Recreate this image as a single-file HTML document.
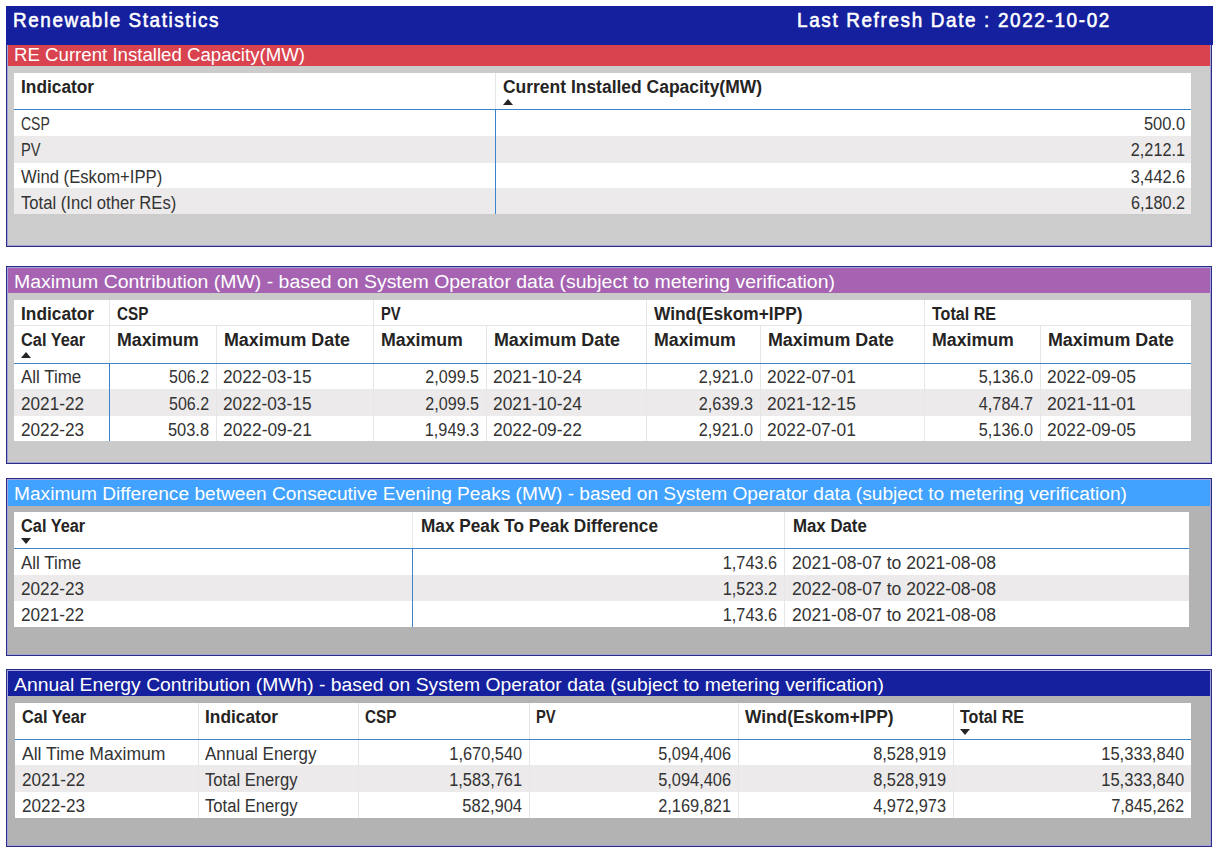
<!DOCTYPE html>
<html><head><meta charset="utf-8"><title>Renewable Statistics</title>
<style>
html,body{margin:0;padding:0;}
body{width:1220px;height:855px;position:relative;overflow:hidden;background:#FFFFFF;font-family:"Liberation Sans",sans-serif;}
body>div{position:absolute;}
.t{white-space:nowrap;}
</style></head><body>
<div style="left:6px;top:40px;width:1206px;height:207px;box-sizing:border-box;border:1px solid #2A2C86;box-shadow:inset 0 0 0 1px #A3A3DA;background:#CCCCCC"></div>
<div style="left:8px;top:45px;width:1202px;height:21px;background:#D8434F;"></div>
<div class="t" style="left:14px;top:44px;font-size:18px;line-height:22px;font-weight:400;color:#FFFFFF;transform:scaleX(1.0353);transform-origin:0 0">RE Current Installed Capacity(MW)</div>
<div style="left:6px;top:6px;width:1207px;height:39px;background:#15209E;"></div>
<div class="t" style="left:12.5px;top:7px;font-size:21px;line-height:25px;color:#FFFFFF;letter-spacing:1.753px;transform:scaleX(0.9);transform-origin:0 0;-webkit-text-stroke:0.6px #FFFFFF">Renewable Statistics</div>
<div class="t" style="left:797px;top:7px;font-size:21px;line-height:25px;color:#FFFFFF;letter-spacing:1.823px;transform:scaleX(0.9);transform-origin:0 0;-webkit-text-stroke:0.6px #FFFFFF">Last Refresh Date : 2022-10-02</div>
<div style="left:14px;top:73px;width:1177px;height:141px;background:#FFFFFF;"></div>
<div style="left:14px;top:136px;width:1177px;height:27px;background:#ECEAEB;"></div>
<div style="left:14px;top:188px;width:1177px;height:26px;background:#ECEAEB;"></div>
<div style="left:14px;top:109px;width:1177px;height:1px;background:#3A84CC;"></div>
<div style="left:495px;top:73px;width:1px;height:36px;background:#E6E6E6;"></div>
<div style="left:495px;top:109px;width:1px;height:105px;background:#3A84CC;"></div>
<div class="t" style="left:21px;top:76px;font-size:18px;line-height:22px;font-weight:700;color:#252423;transform:scaleX(0.9618);transform-origin:0 0">Indicator</div>
<div class="t" style="left:503px;top:76px;font-size:18px;line-height:22px;font-weight:700;color:#252423;transform:scaleX(0.9699);transform-origin:0 0">Current Installed Capacity(MW)</div>
<div style="left:503px;top:99px;width:0;height:0;border-left:5.5px solid transparent;border-right:5.5px solid transparent;border-bottom:6px solid #252423"></div>
<div class="t" style="left:21px;top:113px;font-size:18px;line-height:22px;font-weight:400;color:#333333;transform:scaleX(0.7759);transform-origin:0 0">CSP</div>
<div class="t" style="right:35.00px;top:113px;font-size:18px;line-height:22px;font-weight:400;color:#333333;transform:scaleX(0.9129);transform-origin:100% 0">500.0</div>
<div class="t" style="left:21px;top:139px;font-size:18px;line-height:22px;font-weight:400;color:#333333;transform:scaleX(0.8150);transform-origin:0 0">PV</div>
<div class="t" style="right:35.00px;top:139px;font-size:18px;line-height:22px;font-weight:400;color:#333333;transform:scaleX(0.9034);transform-origin:100% 0">2,212.1</div>
<div class="t" style="left:21px;top:166px;font-size:18px;line-height:22px;font-weight:400;color:#333333;transform:scaleX(0.9256);transform-origin:0 0">Wind (Eskom+IPP)</div>
<div class="t" style="right:35.00px;top:166px;font-size:18px;line-height:22px;font-weight:400;color:#333333;transform:scaleX(0.9034);transform-origin:100% 0">3,442.6</div>
<div class="t" style="left:21px;top:192px;font-size:18px;line-height:22px;font-weight:400;color:#333333;transform:scaleX(0.9240);transform-origin:0 0">Total (Incl other REs)</div>
<div class="t" style="right:35.00px;top:192px;font-size:18px;line-height:22px;font-weight:400;color:#333333;transform:scaleX(0.9005);transform-origin:100% 0">6,180.2</div>
<div style="left:6px;top:266px;width:1206px;height:198px;box-sizing:border-box;border:1px solid #2A2C86;box-shadow:inset 0 0 0 1px #A3A3DA;background:#CACACA"></div>
<div style="left:8px;top:268px;width:1202px;height:25px;background:#A563B1;"></div>
<div class="t" style="left:13.5px;top:271px;font-size:18px;line-height:22px;font-weight:400;color:#FFFFFF;transform:scaleX(1.0798);transform-origin:0 0">Maximum Contribution (MW) - based on System Operator data (subject to metering verification)</div>
<div style="left:14px;top:300px;width:1177px;height:141px;background:#FFFFFF;"></div>
<div style="left:14px;top:389px;width:1177px;height:27px;background:#ECEAEB;"></div>
<div style="left:14px;top:325px;width:1177px;height:1px;background:#E6E6E6;"></div>
<div style="left:109px;top:300px;width:1px;height:25px;background:#E6E6E6;"></div>
<div style="left:373px;top:300px;width:1px;height:25px;background:#E6E6E6;"></div>
<div style="left:646px;top:300px;width:1px;height:25px;background:#E6E6E6;"></div>
<div style="left:924px;top:300px;width:1px;height:25px;background:#E6E6E6;"></div>
<div style="left:109px;top:326px;width:1px;height:37px;background:#E6E6E6;"></div>
<div style="left:109px;top:364px;width:1px;height:77px;background:#3A84CC;"></div>
<div style="left:216px;top:326px;width:1px;height:37px;background:#E6E6E6;"></div>
<div style="left:216px;top:364px;width:1px;height:77px;background:#E6E6E6;"></div>
<div style="left:373px;top:326px;width:1px;height:37px;background:#E6E6E6;"></div>
<div style="left:373px;top:364px;width:1px;height:77px;background:#E6E6E6;"></div>
<div style="left:486px;top:326px;width:1px;height:37px;background:#E6E6E6;"></div>
<div style="left:486px;top:364px;width:1px;height:77px;background:#E6E6E6;"></div>
<div style="left:646px;top:326px;width:1px;height:37px;background:#E6E6E6;"></div>
<div style="left:646px;top:364px;width:1px;height:77px;background:#E6E6E6;"></div>
<div style="left:760px;top:326px;width:1px;height:37px;background:#E6E6E6;"></div>
<div style="left:760px;top:364px;width:1px;height:77px;background:#E6E6E6;"></div>
<div style="left:924px;top:326px;width:1px;height:37px;background:#E6E6E6;"></div>
<div style="left:924px;top:364px;width:1px;height:77px;background:#E6E6E6;"></div>
<div style="left:1040px;top:326px;width:1px;height:37px;background:#E6E6E6;"></div>
<div style="left:1040px;top:364px;width:1px;height:77px;background:#E6E6E6;"></div>
<div style="left:14px;top:363px;width:1177px;height:1px;background:#3A84CC;"></div>
<div class="t" style="left:21px;top:303px;font-size:18px;line-height:22px;font-weight:700;color:#252423;transform:scaleX(0.9618);transform-origin:0 0">Indicator</div>
<div class="t" style="left:117px;top:303px;font-size:18px;line-height:22px;font-weight:700;color:#252423;transform:scaleX(0.8462);transform-origin:0 0">CSP</div>
<div class="t" style="left:381px;top:303px;font-size:18px;line-height:22px;font-weight:700;color:#252423;transform:scaleX(0.8180);transform-origin:0 0">PV</div>
<div class="t" style="left:654px;top:303px;font-size:18px;line-height:22px;font-weight:700;color:#252423;transform:scaleX(0.9620);transform-origin:0 0">Wind(Eskom+IPP)</div>
<div class="t" style="left:932px;top:303px;font-size:18px;line-height:22px;font-weight:700;color:#252423;transform:scaleX(0.8928);transform-origin:0 0">Total RE</div>
<div class="t" style="left:21px;top:329px;font-size:18px;line-height:22px;font-weight:700;color:#252423;transform:scaleX(0.9075);transform-origin:0 0">Cal Year</div>
<div class="t" style="left:117px;top:329px;font-size:18px;line-height:22px;font-weight:700;color:#252423;transform:scaleX(0.9864);transform-origin:0 0">Maximum</div>
<div class="t" style="left:224px;top:329px;font-size:18px;line-height:22px;font-weight:700;color:#252423;transform:scaleX(0.9919);transform-origin:0 0">Maximum Date</div>
<div class="t" style="left:381px;top:329px;font-size:18px;line-height:22px;font-weight:700;color:#252423;transform:scaleX(0.9864);transform-origin:0 0">Maximum</div>
<div class="t" style="left:494px;top:329px;font-size:18px;line-height:22px;font-weight:700;color:#252423;transform:scaleX(0.9919);transform-origin:0 0">Maximum Date</div>
<div class="t" style="left:654px;top:329px;font-size:18px;line-height:22px;font-weight:700;color:#252423;transform:scaleX(0.9864);transform-origin:0 0">Maximum</div>
<div class="t" style="left:768px;top:329px;font-size:18px;line-height:22px;font-weight:700;color:#252423;transform:scaleX(0.9919);transform-origin:0 0">Maximum Date</div>
<div class="t" style="left:932px;top:329px;font-size:18px;line-height:22px;font-weight:700;color:#252423;transform:scaleX(0.9864);transform-origin:0 0">Maximum</div>
<div class="t" style="left:1048px;top:329px;font-size:18px;line-height:22px;font-weight:700;color:#252423;transform:scaleX(0.9919);transform-origin:0 0">Maximum Date</div>
<div style="left:21px;top:352px;width:0;height:0;border-left:5.5px solid transparent;border-right:5.5px solid transparent;border-bottom:6px solid #252423"></div>
<div class="t" style="left:21px;top:366px;font-size:18px;line-height:22px;font-weight:400;color:#333333;transform:scaleX(0.9416);transform-origin:0 0">All Time</div>
<div class="t" style="right:1011.00px;top:366px;font-size:18px;line-height:22px;font-weight:400;color:#333333;transform:scaleX(0.8880);transform-origin:100% 0">506.2</div>
<div class="t" style="left:223px;top:366px;font-size:18px;line-height:22px;font-weight:400;color:#333333;transform:scaleX(0.9612);transform-origin:0 0">2022-03-15</div>
<div class="t" style="right:741.00px;top:366px;font-size:18px;line-height:22px;font-weight:400;color:#333333;transform:scaleX(0.8955);transform-origin:100% 0">2,099.5</div>
<div class="t" style="left:493px;top:366px;font-size:18px;line-height:22px;font-weight:400;color:#333333;transform:scaleX(0.9653);transform-origin:0 0">2021-10-24</div>
<div class="t" style="right:467.00px;top:366px;font-size:18px;line-height:22px;font-weight:400;color:#333333;transform:scaleX(0.9034);transform-origin:100% 0">2,921.0</div>
<div class="t" style="left:767px;top:366px;font-size:18px;line-height:22px;font-weight:400;color:#333333;transform:scaleX(0.9653);transform-origin:0 0">2022-07-01</div>
<div class="t" style="right:187.00px;top:366px;font-size:18px;line-height:22px;font-weight:400;color:#333333;transform:scaleX(0.9034);transform-origin:100% 0">5,136.0</div>
<div class="t" style="left:1047px;top:366px;font-size:18px;line-height:22px;font-weight:400;color:#333333;transform:scaleX(0.9653);transform-origin:0 0">2022-09-05</div>
<div class="t" style="left:21px;top:393px;font-size:18px;line-height:22px;font-weight:400;color:#333333;transform:scaleX(0.9537);transform-origin:0 0">2021-22</div>
<div class="t" style="right:1011.00px;top:393px;font-size:18px;line-height:22px;font-weight:400;color:#333333;transform:scaleX(0.8880);transform-origin:100% 0">506.2</div>
<div class="t" style="left:223px;top:393px;font-size:18px;line-height:22px;font-weight:400;color:#333333;transform:scaleX(0.9612);transform-origin:0 0">2022-03-15</div>
<div class="t" style="right:741.00px;top:393px;font-size:18px;line-height:22px;font-weight:400;color:#333333;transform:scaleX(0.8955);transform-origin:100% 0">2,099.5</div>
<div class="t" style="left:493px;top:393px;font-size:18px;line-height:22px;font-weight:400;color:#333333;transform:scaleX(0.9653);transform-origin:0 0">2021-10-24</div>
<div class="t" style="right:467.00px;top:393px;font-size:18px;line-height:22px;font-weight:400;color:#333333;transform:scaleX(0.9034);transform-origin:100% 0">2,639.3</div>
<div class="t" style="left:767px;top:393px;font-size:18px;line-height:22px;font-weight:400;color:#333333;transform:scaleX(0.9653);transform-origin:0 0">2021-12-15</div>
<div class="t" style="right:187.00px;top:393px;font-size:18px;line-height:22px;font-weight:400;color:#333333;transform:scaleX(0.9034);transform-origin:100% 0">4,784.7</div>
<div class="t" style="left:1047px;top:393px;font-size:18px;line-height:22px;font-weight:400;color:#333333;transform:scaleX(0.9795);transform-origin:0 0">2021-11-01</div>
<div class="t" style="left:21px;top:419px;font-size:18px;line-height:22px;font-weight:400;color:#333333;transform:scaleX(0.9537);transform-origin:0 0">2022-23</div>
<div class="t" style="right:1011.00px;top:419px;font-size:18px;line-height:22px;font-weight:400;color:#333333;transform:scaleX(0.9129);transform-origin:100% 0">503.8</div>
<div class="t" style="left:223px;top:419px;font-size:18px;line-height:22px;font-weight:400;color:#333333;transform:scaleX(0.9653);transform-origin:0 0">2022-09-21</div>
<div class="t" style="right:741.00px;top:419px;font-size:18px;line-height:22px;font-weight:400;color:#333333;transform:scaleX(0.9034);transform-origin:100% 0">1,949.3</div>
<div class="t" style="left:493px;top:419px;font-size:18px;line-height:22px;font-weight:400;color:#333333;transform:scaleX(0.9653);transform-origin:0 0">2022-09-22</div>
<div class="t" style="right:467.00px;top:419px;font-size:18px;line-height:22px;font-weight:400;color:#333333;transform:scaleX(0.9034);transform-origin:100% 0">2,921.0</div>
<div class="t" style="left:767px;top:419px;font-size:18px;line-height:22px;font-weight:400;color:#333333;transform:scaleX(0.9653);transform-origin:0 0">2022-07-01</div>
<div class="t" style="right:187.00px;top:419px;font-size:18px;line-height:22px;font-weight:400;color:#333333;transform:scaleX(0.9034);transform-origin:100% 0">5,136.0</div>
<div class="t" style="left:1047px;top:419px;font-size:18px;line-height:22px;font-weight:400;color:#333333;transform:scaleX(0.9653);transform-origin:0 0">2022-09-05</div>
<div style="left:6px;top:478px;width:1206px;height:178px;box-sizing:border-box;border:1px solid #2A2C86;box-shadow:inset 0 0 0 1px #A3A3DA;background:#B3B3B3"></div>
<div style="left:8px;top:480px;width:1202px;height:26px;background:#41A2FF;"></div>
<div class="t" style="left:13.5px;top:483px;font-size:18px;line-height:22px;font-weight:400;color:#FFFFFF;transform:scaleX(1.0629);transform-origin:0 0">Maximum Difference between Consecutive Evening Peaks (MW) - based on System Operator data (subject to metering verification)</div>
<div style="left:14px;top:512px;width:1175px;height:115px;background:#FFFFFF;"></div>
<div style="left:14px;top:575px;width:1175px;height:26px;background:#ECEAEB;"></div>
<div style="left:412px;top:512px;width:1px;height:36px;background:#E6E6E6;"></div>
<div style="left:784px;top:512px;width:1px;height:36px;background:#E6E6E6;"></div>
<div style="left:412px;top:549px;width:1px;height:78px;background:#3A84CC;"></div>
<div style="left:784px;top:549px;width:1px;height:78px;background:#E6E6E6;"></div>
<div style="left:14px;top:548px;width:1175px;height:1px;background:#3A84CC;"></div>
<div class="t" style="left:21px;top:515px;font-size:18px;line-height:22px;font-weight:700;color:#252423;transform:scaleX(0.9075);transform-origin:0 0">Cal Year</div>
<div class="t" style="left:421px;top:515px;font-size:18px;line-height:22px;font-weight:700;color:#252423;transform:scaleX(0.9565);transform-origin:0 0">Max Peak To Peak Difference</div>
<div class="t" style="left:793px;top:515px;font-size:18px;line-height:22px;font-weight:700;color:#252423;transform:scaleX(0.9341);transform-origin:0 0">Max Date</div>
<div style="left:21px;top:538px;width:0;height:0;border-left:5.5px solid transparent;border-right:5.5px solid transparent;border-top:6px solid #252423"></div>
<div class="t" style="left:21px;top:552px;font-size:18px;line-height:22px;font-weight:400;color:#333333;transform:scaleX(0.9416);transform-origin:0 0">All Time</div>
<div class="t" style="right:443.00px;top:552px;font-size:18px;line-height:22px;font-weight:400;color:#333333;transform:scaleX(0.9034);transform-origin:100% 0">1,743.6</div>
<div class="t" style="left:792px;top:552px;font-size:18px;line-height:22px;font-weight:400;color:#333333;transform:scaleX(0.9753);transform-origin:0 0">2021-08-07 to 2021-08-08</div>
<div class="t" style="left:21px;top:578px;font-size:18px;line-height:22px;font-weight:400;color:#333333;transform:scaleX(0.9537);transform-origin:0 0">2022-23</div>
<div class="t" style="right:443.00px;top:578px;font-size:18px;line-height:22px;font-weight:400;color:#333333;transform:scaleX(0.9034);transform-origin:100% 0">1,523.2</div>
<div class="t" style="left:792px;top:578px;font-size:18px;line-height:22px;font-weight:400;color:#333333;transform:scaleX(0.9753);transform-origin:0 0">2022-08-07 to 2022-08-08</div>
<div class="t" style="left:21px;top:604px;font-size:18px;line-height:22px;font-weight:400;color:#333333;transform:scaleX(0.9537);transform-origin:0 0">2021-22</div>
<div class="t" style="right:443.00px;top:604px;font-size:18px;line-height:22px;font-weight:400;color:#333333;transform:scaleX(0.9034);transform-origin:100% 0">1,743.6</div>
<div class="t" style="left:792px;top:604px;font-size:18px;line-height:22px;font-weight:400;color:#333333;transform:scaleX(0.9753);transform-origin:0 0">2021-08-07 to 2021-08-08</div>
<div style="left:6px;top:669px;width:1206px;height:178px;box-sizing:border-box;border:1px solid #2A2C86;box-shadow:inset 0 0 0 1px #A3A3DA;background:#B3B3B3"></div>
<div style="left:8px;top:671px;width:1202px;height:25px;background:#15209E;"></div>
<div class="t" style="left:14px;top:674px;font-size:18px;line-height:22px;font-weight:400;color:#FFFFFF;transform:scaleX(1.0736);transform-origin:0 0">Annual Energy Contribution (MWh) - based on System Operator data (subject to metering verification)</div>
<div style="left:15px;top:703px;width:1176px;height:115px;background:#FFFFFF;"></div>
<div style="left:15px;top:765px;width:1176px;height:27px;background:#ECEAEB;"></div>
<div style="left:198px;top:703px;width:1px;height:115px;background:#E6E6E6;"></div>
<div style="left:358px;top:703px;width:1px;height:115px;background:#E6E6E6;"></div>
<div style="left:529px;top:703px;width:1px;height:115px;background:#E6E6E6;"></div>
<div style="left:738px;top:703px;width:1px;height:115px;background:#E6E6E6;"></div>
<div style="left:953px;top:703px;width:1px;height:115px;background:#E6E6E6;"></div>
<div style="left:15px;top:739px;width:1176px;height:1px;background:#3A84CC;"></div>
<div class="t" style="left:22px;top:706px;font-size:18px;line-height:22px;font-weight:700;color:#252423;transform:scaleX(0.9075);transform-origin:0 0">Cal Year</div>
<div class="t" style="left:205px;top:706px;font-size:18px;line-height:22px;font-weight:700;color:#252423;transform:scaleX(0.9618);transform-origin:0 0">Indicator</div>
<div class="t" style="left:365px;top:706px;font-size:18px;line-height:22px;font-weight:700;color:#252423;transform:scaleX(0.8462);transform-origin:0 0">CSP</div>
<div class="t" style="left:536px;top:706px;font-size:18px;line-height:22px;font-weight:700;color:#252423;transform:scaleX(0.8180);transform-origin:0 0">PV</div>
<div class="t" style="left:745px;top:706px;font-size:18px;line-height:22px;font-weight:700;color:#252423;transform:scaleX(0.9620);transform-origin:0 0">Wind(Eskom+IPP)</div>
<div class="t" style="left:960px;top:706px;font-size:18px;line-height:22px;font-weight:700;color:#252423;transform:scaleX(0.8928);transform-origin:0 0">Total RE</div>
<div style="left:960px;top:729px;width:0;height:0;border-left:5.5px solid transparent;border-right:5.5px solid transparent;border-top:6px solid #252423"></div>
<div class="t" style="left:22px;top:743px;font-size:18px;line-height:22px;font-weight:400;color:#333333;transform:scaleX(0.9761);transform-origin:0 0">All Time Maximum</div>
<div class="t" style="left:205px;top:743px;font-size:18px;line-height:22px;font-weight:400;color:#333333;transform:scaleX(0.9434);transform-origin:0 0">Annual Energy</div>
<div class="t" style="right:698.00px;top:743px;font-size:18px;line-height:22px;font-weight:400;color:#333333;transform:scaleX(0.9089);transform-origin:100% 0">1,670,540</div>
<div class="t" style="right:489.00px;top:743px;font-size:18px;line-height:22px;font-weight:400;color:#333333;transform:scaleX(0.9105);transform-origin:100% 0">5,094,406</div>
<div class="t" style="right:274.00px;top:743px;font-size:18px;line-height:22px;font-weight:400;color:#333333;transform:scaleX(0.9105);transform-origin:100% 0">8,528,919</div>
<div class="t" style="right:36.00px;top:743px;font-size:18px;line-height:22px;font-weight:400;color:#333333;transform:scaleX(0.9202);transform-origin:100% 0">15,333,840</div>
<div class="t" style="left:22px;top:769px;font-size:18px;line-height:22px;font-weight:400;color:#333333;transform:scaleX(0.9537);transform-origin:0 0">2021-22</div>
<div class="t" style="left:205px;top:769px;font-size:18px;line-height:22px;font-weight:400;color:#333333;transform:scaleX(0.9243);transform-origin:0 0">Total Energy</div>
<div class="t" style="right:698.00px;top:769px;font-size:18px;line-height:22px;font-weight:400;color:#333333;transform:scaleX(0.9105);transform-origin:100% 0">1,583,761</div>
<div class="t" style="right:489.00px;top:769px;font-size:18px;line-height:22px;font-weight:400;color:#333333;transform:scaleX(0.9105);transform-origin:100% 0">5,094,406</div>
<div class="t" style="right:274.00px;top:769px;font-size:18px;line-height:22px;font-weight:400;color:#333333;transform:scaleX(0.9105);transform-origin:100% 0">8,528,919</div>
<div class="t" style="right:36.00px;top:769px;font-size:18px;line-height:22px;font-weight:400;color:#333333;transform:scaleX(0.9202);transform-origin:100% 0">15,333,840</div>
<div class="t" style="left:22px;top:795px;font-size:18px;line-height:22px;font-weight:400;color:#333333;transform:scaleX(0.9537);transform-origin:0 0">2022-23</div>
<div class="t" style="left:205px;top:795px;font-size:18px;line-height:22px;font-weight:400;color:#333333;transform:scaleX(0.9243);transform-origin:0 0">Total Energy</div>
<div class="t" style="right:698.00px;top:795px;font-size:18px;line-height:22px;font-weight:400;color:#333333;transform:scaleX(0.9188);transform-origin:100% 0">582,904</div>
<div class="t" style="right:489.00px;top:795px;font-size:18px;line-height:22px;font-weight:400;color:#333333;transform:scaleX(0.9105);transform-origin:100% 0">2,169,821</div>
<div class="t" style="right:274.00px;top:795px;font-size:18px;line-height:22px;font-weight:400;color:#333333;transform:scaleX(0.9105);transform-origin:100% 0">4,972,973</div>
<div class="t" style="right:36.00px;top:795px;font-size:18px;line-height:22px;font-weight:400;color:#333333;transform:scaleX(0.9105);transform-origin:100% 0">7,845,262</div>
</body></html>
